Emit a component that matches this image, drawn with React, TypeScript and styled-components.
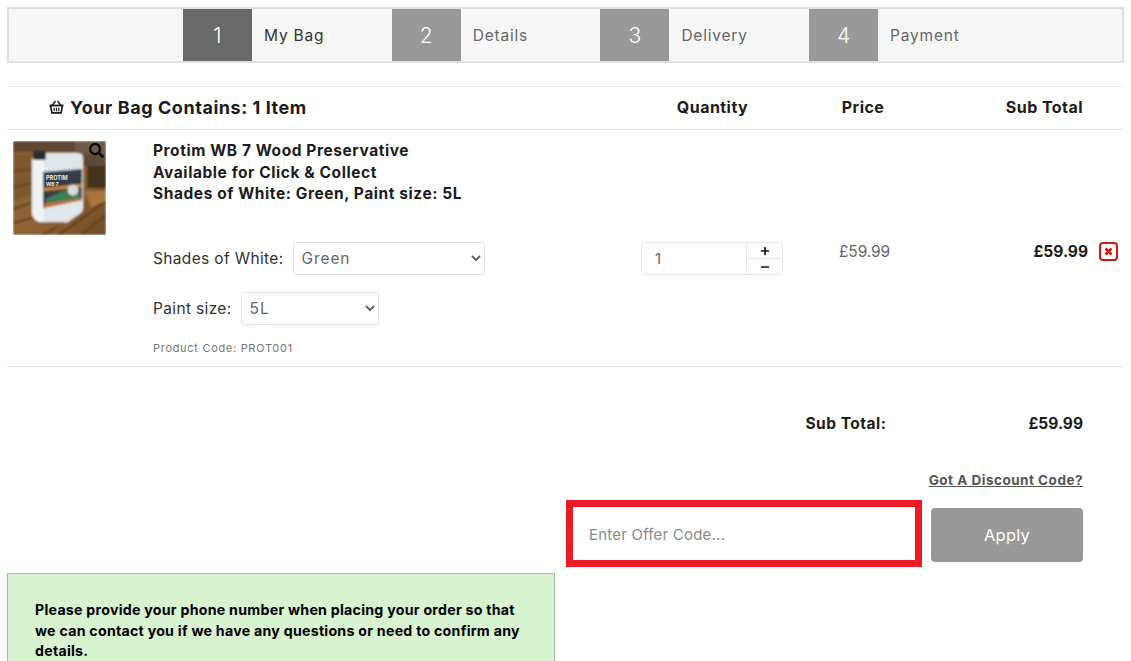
import React from 'react';
import styled, { createGlobalStyle } from 'styled-components';
import { FaSearch } from 'react-icons/fa';
import { Plus, Minus } from 'lucide-react';

const GlobalStyle = createGlobalStyle`
  html, body {
    margin: 0;
    padding: 0;
    background: #fff;
    overflow: hidden;
  }
  body {
    font-family: Inter, "Liberation Sans", sans-serif;
    color: #1c1c1c;
  }
`;

const Page = styled.div`
  width: 1131px;
  height: 661px;
  overflow: hidden;
  box-sizing: border-box;
  padding: 7px 7px 0;
`;

const StepsBar = styled.div`
  display: flex;
  height: 56px;
  box-sizing: border-box;
  border: 2px solid #dfdfdf;
  background: #f6f6f6;
  padding-left: 174px;
`;

const Step = styled.div`
  display: flex;
  width: 208.7px;
`;

const StepNumber = styled.div<{ $active?: boolean }>`
  width: 69px;
  display: flex;
  align-items: center;
  justify-content: center;
  background: ${({ $active }) => ($active ? '#696969' : '#999999')};
  color: #fff;
  font-size: 21px;
  font-weight: 300;
`;

const StepLabel = styled.div<{ $active?: boolean }>`
  padding-left: 12px;
  display: flex;
  align-items: center;
  font-size: 15.5px;
  font-weight: 400;
  letter-spacing: 0.8px;
  color: ${({ $active }) => ($active ? '#333' : '#666')};
`;

const Columns = `
  display: grid;
  grid-template-columns: 634px 143px 158px 1fr;
`;

const HeaderRow = styled.div`
  ${Columns}
  margin-top: 23px;
  height: 44px;
  box-sizing: border-box;
  padding-bottom: 2px;
  border-top: 1px solid #efefef;
  border-bottom: 1px solid #e8e8e8;
  align-items: center;
  font-size: 16px;
  font-weight: 700;
  letter-spacing: 0.45px;
`;

const BagTitle = styled.div`
  display: flex;
  align-items: center;
  gap: 6px;
  padding-left: 42px;
  font-size: 18px;
  letter-spacing: 0.55px;
`;

const CenterHead = styled.div`
  text-align: center;
`;

const RightHead = styled.div`
  text-align: right;
  padding-right: 41px;
`;

const ItemRow = styled.div`
  ${Columns}
  height: 237px;
  box-sizing: border-box;
  border-bottom: 1px solid #e8e8e8;
`;

const ItemMain = styled.div`
  display: flex;
  padding: 11px 0 0 6px;
`;

const Thumb = styled.div`
  position: relative;
  width: 93px;
  height: 94px;
  flex-shrink: 0;
`;

const ZoomIcon = styled.div`
  position: absolute;
  top: 2px;
  right: 2px;
  font-size: 15px;
  line-height: 0;
  color: #0c0c0c;
`;

const ItemBody = styled.div`
  margin: -1px 0 0 47px;
`;

const ItemTitle = styled.div`
  font-size: 15.5px;
  font-weight: 700;
  line-height: 21.5px;
  letter-spacing: 0.57px;
  margin-bottom: 37px;
  white-space: nowrap;
`;

const OptionRow = styled.div`
  display: flex;
  align-items: center;
  gap: 9px;
  margin-bottom: 17px;
  font-size: 15.5px;
  letter-spacing: 0.35px;
  color: #333;
  white-space: nowrap;
`;

const OptionSelect = styled.select<{ $width: number }>`
  width: ${({ $width }) => $width}px;
  height: 33px;
  box-sizing: border-box;
  padding-left: 4px;
  border: 1px solid #e4e4e4;
  border-radius: 3px;
  background: #fff;
  color: #666;
  font-family: inherit;
  font-size: 15.5px;
  letter-spacing: 0.9px;
`;

const ProductCode = styled.div`
  margin-top: -1px;
  font-size: 11px;
  letter-spacing: 0.7px;
  color: #777;
`;

const QtyCell = styled.div`
  padding-top: 112px;
`;

const QtyBox = styled.div`
  display: flex;
  width: 142px;
  height: 33px;
  box-sizing: border-box;
  border: 1px solid #e6e6e6;
  border-radius: 3px;
`;

const QtyValue = styled.div`
  flex: 1;
  padding-left: 13px;
  display: flex;
  align-items: center;
  font-size: 15px;
  color: #666;
`;

const QtyButtons = styled.div`
  width: 35px;
  display: flex;
  flex-direction: column;
  border-left: 1px solid #e6e6e6;
`;

const QtyButton = styled.div`
  height: 15px;
  display: flex;
  align-items: center;
  justify-content: center;
  color: #111;

  & + & {
    height: 16px;
    box-sizing: border-box;
    border-top: 1px solid #e6e6e6;
  }
`;

const PriceCell = styled.div`
  padding-top: 112px;
  padding-left: 55px;
  font-size: 15.5px;
  line-height: 20px;
  letter-spacing: -0.1px;
  color: #666;
`;

const SubTotalCell = styled.div`
  display: flex;
  justify-content: flex-end;
  align-items: flex-start;
  gap: 11px;
  padding: 112px 6px 0 0;
  font-size: 15.5px;
  line-height: 20px;
  font-weight: 700;
`;

const TotalRow = styled.div`
  display: flex;
  justify-content: flex-end;
  margin-top: 47px;
  padding-right: 41px;
  font-size: 15.5px;
  line-height: 20px;
  font-weight: 700;
`;

const TotalLabel = styled.div`
  margin-right: 142px;
  letter-spacing: 0.5px;
`;

const DiscountLink = styled.a`
  display: block;
  width: fit-content;
  margin: 37px 41px 0 auto;
  font-size: 13.5px;
  line-height: 18px;
  font-weight: 700;
  letter-spacing: 0.5px;
  color: #555;
  text-decoration: underline;
`;

const OfferRow = styled.div`
  display: flex;
  justify-content: flex-end;
  align-items: center;
  gap: 9px;
  margin-top: 11px;
  padding-right: 41px;
`;

const OfferBox = styled.div`
  width: 356px;
  height: 67px;
  box-sizing: border-box;
  border: 7px solid #ed1c24;
  padding: 2px 0 0 16px;
  display: flex;
  align-items: center;
  font-size: 15px;
  letter-spacing: 0.2px;
  color: #8a8a8a;
`;

const ApplyButton = styled.button`
  width: 152px;
  height: 54px;
  margin-top: 3px;
  border: none;
  border-radius: 4px;
  background: #999;
  color: #fff;
  font-family: inherit;
  font-size: 16.5px;
  letter-spacing: 0.2px;
`;

const Notice = styled.div`
  width: 548px;
  height: 140px;
  margin-top: 6px;
  box-sizing: border-box;
  padding: 26px 27px;
  background: #d8f3cf;
  border: 1px solid #a9b8a4;
  font-size: 14.2px;
  line-height: 20.5px;
  font-weight: 700;
  letter-spacing: 0.25px;
  color: #000;
`;

const BasketIcon = () => (
  <svg width="15" height="14" viewBox="0 0 15 14" fill="none" stroke="#1c1c1c">
    <path d="M0.5 5.5h14" strokeWidth="1.8" />
    <path d="M3 5.5 6.5 1M12 5.5 8.5 1" strokeWidth="1.4" />
    <path d="M1.7 6l1.2 6.8h9.2L13.3 6" strokeWidth="1.7" />
    <path d="M5.2 7.8v3.4M7.5 7.8v3.4M9.8 7.8v3.4" strokeWidth="1.2" />
  </svg>
);

const RemoveIcon = () => (
  <svg width="19" height="19" viewBox="0 0 19 19" fill="none">
    <rect x="1" y="1" width="17" height="17" rx="3" stroke="#d8140c" strokeWidth="2" />
    <path d="M6.5 6.5l6 6M12.5 6.5l-6 6" stroke="#d8140c" strokeWidth="2.6" />
  </svg>
);

const ProductPhoto = () => (
  <svg width="93" height="94" viewBox="0 0 93 94">
    <defs>
      <linearGradient id="deck" x1="0" y1="0" x2="1" y2="1">
        <stop offset="0" stopColor="#8b6238" />
        <stop offset="0.55" stopColor="#8f6233" />
        <stop offset="1" stopColor="#6f4b26" />
      </linearGradient>
      <filter id="soft">
        <feGaussianBlur stdDeviation="0.8" />
      </filter>
    </defs>
    <g filter="url(#soft)">
      <rect width="93" height="94" fill="url(#deck)" />
      <rect width="62" height="11" fill="#5f4630" />
      <rect x="62" width="31" height="13" fill="#6f5a48" />
      <rect x="70" y="13" width="23" height="12" fill="#5e4a38" />
      <rect x="74" y="25" width="19" height="22" fill="#43321f" />
      <path d="M0 13h62v4H24v36l-24 6z" fill="#80582f" />
      <path d="M0 30 20 28M0 46 20 42" stroke="#694722" strokeWidth="2" />
      <path d="M0 68 18 62M0 82 22 76M46 94 93 60M68 94 93 74M30 94 44 86" stroke="#5a3a1a" strokeWidth="1.6" />
      <path d="M72 50h21v10L78 66z" fill="#a8763e" />
      <path d="M26 12h38q6 0 6 5v51q0 3-5 6l-10 7q-2 1-5 0H26q-6-3-7-8V20q1-7 7-8z" fill="#dfe7eb" />
      <path d="M19 20q1-7 7-8h2l3 6v63h-5q-6-3-7-8z" fill="#f0f3f6" />
      <rect x="20" y="10" width="13" height="9" rx="2" fill="#2b2f33" />
      <path d="M30 31l39-3v31l-39 8z" fill="#373e46" />
      <path d="M31 47l38-4v3l-38 4z" fill="#d88a36" />
      <path d="M33 58l16-8h10l8 2v7l-34 7z" fill="#3f7d5b" />
      <path d="M31 63l38-6v2l-38 8z" fill="#cd6a2c" />
      <circle cx="60" cy="49" r="5.5" fill="#d6dddc" />
    </g>
    <text x="33" y="39" fontSize="5.5" fontWeight="700" fill="#e8e8e8" fontFamily="Inter, sans-serif">PROTIM</text>
    <text x="33" y="45" fontSize="5" fontWeight="700" fill="#e8e8e8" fontFamily="Inter, sans-serif">WB 7</text>
  </svg>
);

const steps = [
  { n: 1, label: 'My Bag', active: true },
  { n: 2, label: 'Details' },
  { n: 3, label: 'Delivery' },
  { n: 4, label: 'Payment' },
];

const App: React.FC = () => {
  return (
    <Page>
      <GlobalStyle />
      <StepsBar>
        {steps.map((s) => (
          <Step key={s.n}>
            <StepNumber $active={s.active}>{s.n}</StepNumber>
            <StepLabel $active={s.active}>{s.label}</StepLabel>
          </Step>
        ))}
      </StepsBar>

      <HeaderRow>
        <BagTitle>
          <BasketIcon />
          Your Bag Contains: 1 Item
        </BagTitle>
        <CenterHead>Quantity</CenterHead>
        <CenterHead>Price</CenterHead>
        <RightHead>Sub Total</RightHead>
      </HeaderRow>

      <ItemRow>
        <ItemMain>
          <Thumb>
            <ProductPhoto />
            <ZoomIcon>
              <FaSearch />
            </ZoomIcon>
          </Thumb>
          <ItemBody>
            <ItemTitle>
              Protim WB 7 Wood Preservative
              <br />
              Available for Click &amp; Collect
              <br />
              Shades of White: Green, Paint size: 5L
            </ItemTitle>
            <OptionRow>
              Shades of White:
              <OptionSelect $width={192} defaultValue="Green">
                <option>Green</option>
              </OptionSelect>
            </OptionRow>
            <OptionRow>
              Paint size:
              <OptionSelect $width={138} defaultValue="5L">
                <option>5L</option>
              </OptionSelect>
            </OptionRow>
            <ProductCode>Product Code: PROT001</ProductCode>
          </ItemBody>
        </ItemMain>
        <QtyCell>
          <QtyBox>
            <QtyValue>1</QtyValue>
            <QtyButtons>
              <QtyButton>
                <Plus size={12} strokeWidth={3.4} />
              </QtyButton>
              <QtyButton>
                <Minus size={12} strokeWidth={3.4} />
              </QtyButton>
            </QtyButtons>
          </QtyBox>
        </QtyCell>
        <PriceCell>£59.99</PriceCell>
        <SubTotalCell>
          £59.99
          <RemoveIcon />
        </SubTotalCell>
      </ItemRow>

      <TotalRow>
        <TotalLabel>Sub Total:</TotalLabel>
        £59.99
      </TotalRow>

      <DiscountLink>Got A Discount Code?</DiscountLink>

      <OfferRow>
        <OfferBox>Enter Offer Code...</OfferBox>
        <ApplyButton>Apply</ApplyButton>
      </OfferRow>

      <Notice>
        Please provide your phone number when placing your order so that we can contact you if we
        have any questions or need to confirm any details.
      </Notice>
    </Page>
  );
};

export default App;
